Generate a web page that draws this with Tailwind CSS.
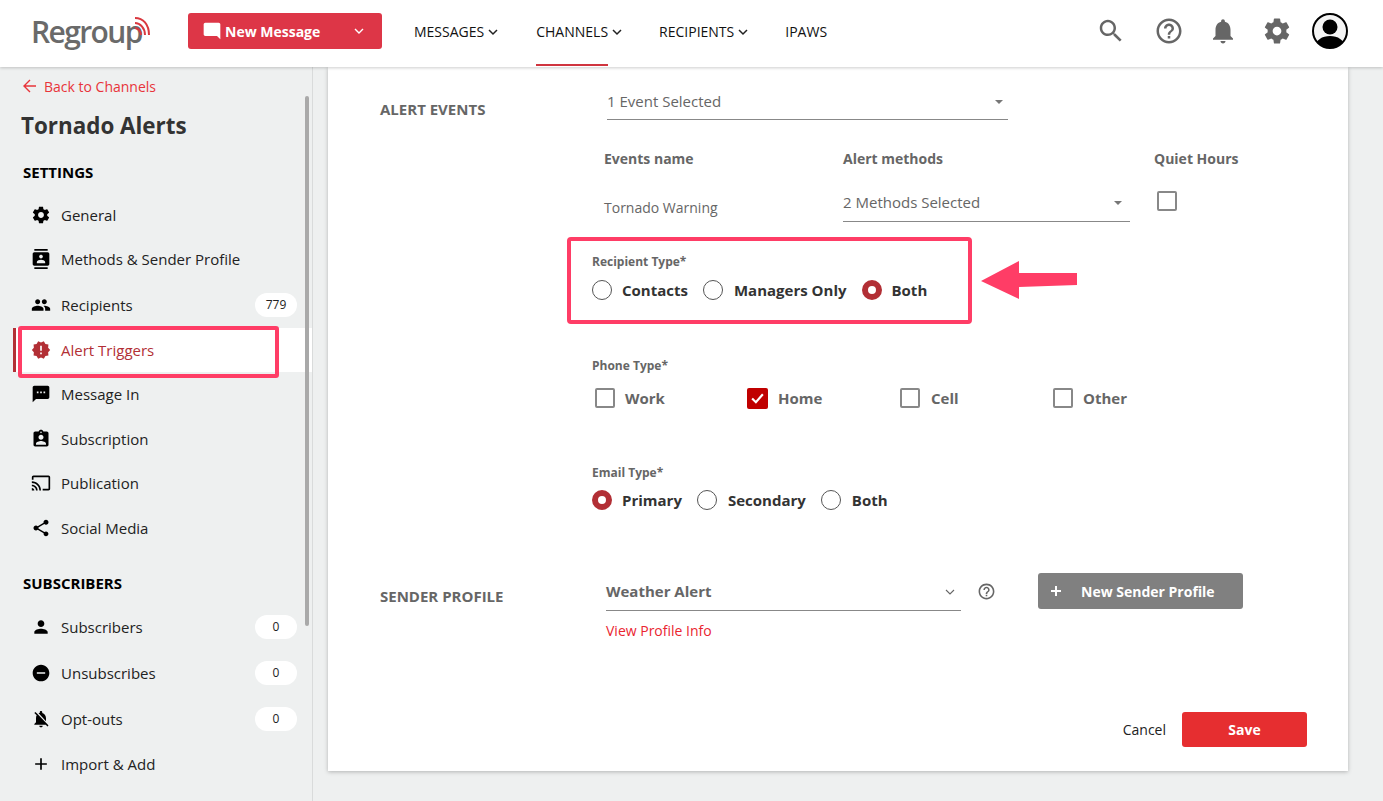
<!DOCTYPE html>
<html>
<head>
<meta charset="utf-8">
<script src="https://cdn.jsdelivr.net/npm/@tailwindcss/browser@4"></script>
</head>
<body class="bg-[#eef0f0] font-['Open_Sans',sans-serif] overflow-hidden">
<div class="relative w-[1383px] h-[801px] overflow-hidden flex flex-col">
  <header class="h-[67px] shrink-0 bg-white shadow-[0_1px_3px_rgba(0,0,0,0.2)] flex items-start relative z-10">
    <div class="w-[188px] shrink-0 pl-[31px] pt-[11px] relative h-full">
      <span class="block text-[30px] leading-[42px] font-semibold text-[#6a6a6a] tracking-[-1.6px]">Regroup</span>
      <svg class="absolute left-[128px] top-[16px]" width="24" height="22" viewBox="0 0 24 22" fill="none" stroke="#d9383f" stroke-width="2"><path d="M7 2c8 0 14 6 14 17"/><path d="M7 7c5 0 10 5 10 12"/><path d="M7 12c3 0 6 3 6 7"/></svg>
    </div>
    <div class="mt-[13px] w-[194px] h-[36px] bg-[#dd3647] rounded-[3px] flex items-center pl-[14px] text-white">
      <svg width="20" height="20" viewBox="0 0 24 24" fill="#fff" class="-scale-x-100 mr-[3px] shrink-0"><path d="M20 2H4c-1.1 0-2 .9-2 2v18l4-4h14c1.1 0 2-.9 2-2V4c0-1.1-.9-2-2-2z"/></svg>
      <span class="text-[14px] font-bold">New Message</span>
      <svg class="ml-[33px]" width="12" height="12" viewBox="0 0 12 12" fill="none" stroke="#fff" stroke-width="1.4"><path d="M2 4l4 4 4-4"/></svg>
    </div>
    <nav class="flex h-full text-[14px] text-[#111]">
      <div class="ml-[32px] flex items-center h-[63px] gap-[4px]">MESSAGES<svg width="10" height="8" viewBox="0 0 10 8" fill="none" stroke="#222" stroke-width="1.5"><path d="M1 2l4 4 4-4"/></svg></div>
      <div class="ml-[38px] flex items-center h-[66px] gap-[4px]"><span class="h-full flex items-center pb-[2px] border-b-2 border-[#d0353f]">CHANNELS</span><svg class="-mt-[3px]" width="10" height="8" viewBox="0 0 10 8" fill="none" stroke="#222" stroke-width="1.5"><path d="M1 2l4 4 4-4"/></svg></div>
      <div class="ml-[37px] flex items-center h-[63px] gap-[4px]">RECIPIENTS<svg width="10" height="8" viewBox="0 0 10 8" fill="none" stroke="#222" stroke-width="1.5"><path d="M1 2l4 4 4-4"/></svg></div>
      <div class="ml-[37px] flex items-center h-[63px]">IPAWS</div>
    </nav>
    <div class="ml-auto mr-[35px] mt-[13px] flex items-center h-[36px] text-[#666]">
      <svg width="30" height="30" viewBox="0 0 24 24" fill="#666"><path d="M15.5 14h-.79l-.28-.27C15.41 12.59 16 11.11 16 9.5 16 5.91 13.09 3 9.5 3S3 5.91 3 9.5 5.91 16 9.5 16c1.61 0 3.09-.59 4.23-1.57l.27.28v.79l5 4.99L20.49 19l-4.99-5zm-6 0C7.01 14 5 11.99 5 9.5S7.01 5 9.5 5 14 7.01 14 9.5 11.99 14 9.5 14z"/></svg>
      <svg class="ml-[28px]" width="30" height="30" viewBox="0 0 24 24" fill="#666"><path d="M11 18h2v-2h-2v2zm1-16C6.48 2 2 6.48 2 12s4.48 10 10 10 10-4.48 10-10S17.52 2 12 2zm0 18c-4.41 0-8-3.59-8-8s3.59-8 8-8 8 3.59 8 8-3.59 8-8 8zm0-14c-2.21 0-4 1.79-4 4h2c0-1.1.9-2 2-2s2 .9 2 2c0 2-3 1.75-3 5h2c0-2.25 3-2.5 3-5 0-2.21-1.79-4-4-4z"/></svg>
      <svg class="ml-[24px]" width="30" height="30" viewBox="0 0 24 24" fill="#666"><path d="M12 22c1.1 0 2-.9 2-2h-4c0 1.1.89 2 2 2zm6-6v-5c0-3.07-1.64-5.64-4.5-6.32V4c0-.83-.67-1.5-1.5-1.5s-1.5.67-1.5 1.5v.68C7.63 5.36 6 7.92 6 11v5l-2 2v1h16v-1l-2-2z"/></svg>
      <svg class="ml-[24px]" width="30" height="30" viewBox="0 0 24 24" fill="#666"><path d="M19.43 12.98c.04-.32.07-.64.07-.98s-.03-.66-.07-.98l2.11-1.65c.19-.15.24-.42.12-.64l-2-3.46c-.12-.22-.39-.3-.61-.22l-2.49 1c-.52-.4-1.08-.73-1.69-.98l-.38-2.65C14.46 2.18 14.25 2 14 2h-4c-.25 0-.46.18-.49.42l-.38 2.65c-.61.25-1.17.59-1.69.98l-2.49-1c-.23-.09-.49 0-.61.22l-2 3.46c-.13.22-.07.49.12.64l2.11 1.65c-.04.32-.07.65-.07.98s.03.66.07.98l-2.11 1.65c-.19.15-.24.42-.12.64l2 3.46c.12.22.39.3.61.22l2.49-1c.52.4 1.08.73 1.69.98l.38 2.65c.03.24.24.42.49.42h4c.25 0 .46-.18.49-.42l.38-2.65c.61-.25 1.17-.59 1.69-.98l2.49 1c.23.09.49 0 .61-.22l2-3.46c.12-.22.07-.49-.12-.64l-2.11-1.65zM12 15.5c-1.93 0-3.5-1.57-3.5-3.5s1.57-3.5 3.5-3.5 3.5 1.57 3.5 3.5-1.57 3.5-3.5 3.5z"/></svg>
      <svg class="ml-[20px]" width="36" height="36" viewBox="0 0 36 36"><circle cx="18" cy="18" r="17" fill="#f4f4f4" stroke="#000" stroke-width="2"/><clipPath id="av"><circle cx="18" cy="18" r="17"/></clipPath><g clip-path="url(#av)" fill="#000"><circle cx="18" cy="14" r="7.5"/><path d="M3 36c0-9 7-13 15-13s15 4 15 13z"/></g></svg>
    </div>
  </header>

  <div class="flex flex-1 min-h-0">
    <aside class="relative w-[313px] shrink-0 border-r border-[#d9dbdb] text-[15px] text-[#222]">
      <div class="absolute left-[305px] top-[29px] w-[4px] h-[530px] rounded-full bg-[#a9a9a9]"></div>
      <div class="pl-[22px] pt-[8px] flex items-center h-[30px] text-[14px] text-[#e8343a]">
        <svg width="16" height="16" viewBox="0 0 16 16" fill="none" stroke="#e8343a" stroke-width="1.4" class="mr-[6px]"><path d="M14 8H2M8 2L2 8l6 6"/></svg>Back to Channels
      </div>
      <h1 class="pl-[21px] mt-[14px] text-[22.4px] leading-[30px] font-bold text-[#333]">Tornado Alerts</h1>
      <h2 class="pl-[23px] mt-[21px] text-[15px] leading-[20px] font-bold text-black">SETTINGS</h2>
      <ul class="mt-[11px]">
        <li class="h-[44px] flex items-center pl-[31px]"><svg class="mr-[10px]" width="20" height="20" viewBox="0 0 24 24"><path d="M19.43 12.98c.04-.32.07-.64.07-.98s-.03-.66-.07-.98l2.11-1.65c.19-.15.24-.42.12-.64l-2-3.46c-.12-.22-.39-.3-.61-.22l-2.49 1c-.52-.4-1.08-.73-1.69-.98l-.38-2.65C14.46 2.18 14.25 2 14 2h-4c-.25 0-.46.18-.49.42l-.38 2.65c-.61.25-1.17.59-1.69.98l-2.49-1c-.23-.09-.49 0-.61.22l-2 3.46c-.13.22-.07.49.12.64l2.11 1.65c-.04.32-.07.65-.07.98s.03.66.07.98l-2.11 1.65c-.19.15-.24.42-.12.64l2 3.46c.12.22.39.3.61.22l2.49-1c.52.4 1.08.73 1.69.98l.38 2.65c.03.24.24.42.49.42h4c.25 0 .46-.18.49-.42l.38-2.65c.61-.25 1.17-.59 1.69-.98l2.49 1c.23.09.49 0 .61-.22l2-3.46c.12-.22.07-.49-.12-.64l-2.11-1.65zM12 15.5c-1.93 0-3.5-1.57-3.5-3.5s1.57-3.5 3.5-3.5 3.5 1.57 3.5 3.5-1.57 3.5-3.5 3.5z"/></svg>General</li>
        <li class="h-[44px] flex items-center pl-[31px]"><svg class="mr-[10px]" width="20" height="20" viewBox="0 0 24 24"><path d="M20 0H4v2h16V0zM4 24h16v-2H4v2zM20 4H4c-1.1 0-2 .9-2 2v12c0 1.1.9 2 2 2h16c1.1 0 2-.9 2-2V6c0-1.1-.9-2-2-2zm-8 2.75c1.24 0 2.25 1.01 2.25 2.25s-1.01 2.25-2.25 2.25S9.75 10.24 9.75 9 10.76 6.75 12 6.75zM17 17H7v-1.5c0-1.67 3.33-2.5 5-2.5s5 .83 5 2.5V17z"/></svg>Methods &amp; Sender Profile</li>
        <li class="h-[44px] mt-[2px] flex items-center pl-[31px]"><svg class="mr-[10px]" width="20" height="20" viewBox="0 0 24 24"><path d="M16 11c1.66 0 2.99-1.34 2.99-3S17.66 5 16 5c-1.66 0-3 1.34-3 3s1.34 3 3 3zm-8 0c1.66 0 2.99-1.34 2.99-3S9.66 5 8 5C6.34 5 5 6.34 5 8s1.34 3 3 3zm0 2c-2.33 0-7 1.17-7 3.5V19h14v-2.5c0-2.33-4.67-3.5-7-3.5zm8 0c-.29 0-.62.02-.97.05 1.16.84 1.97 1.97 1.97 3.45V19h6v-2.5c0-2.33-4.67-3.5-7-3.5z"/></svg>Recipients<span class="ml-auto mr-[15px] w-[42px] h-[24px] rounded-full bg-white flex items-center justify-center text-[12px]">779</span></li>
        <li class="h-[44px] mt-[1px] ml-[13px] flex items-center pl-[15px] bg-white border-l-[3px] border-[#b22f35] text-[#b22f35]"><svg class="mr-[10px]" width="20" height="20" viewBox="0 0 24 24" fill="#b22f35"><path d="M23 12l-2.44-2.78.34-3.68-3.61-.82-1.89-3.18L12 3 8.6 1.54 6.71 4.72l-3.61.81.34 3.68L1 12l2.44 2.78-.34 3.69 3.61.82 1.89 3.18L12 21l3.4 1.46 1.89-3.18 3.61-.82-.34-3.68L23 12zm-10 5h-2v-2h2v2zm0-4h-2V7h2v6z"/></svg>Alert Triggers</li>
        <li class="h-[44px] flex items-center pl-[31px]"><svg class="mr-[10px]" width="20" height="20" viewBox="0 0 24 24"><path d="M20 2H4c-1.1 0-1.99.9-1.99 2L2 22l4-4h14c1.1 0 2-.9 2-2V4c0-1.1-.9-2-2-2zM9 11H7V9h2v2zm4 0h-2V9h2v2zm4 0h-2V9h2v2z"/></svg>Message In</li>
        <li class="h-[44px] mt-[1px] flex items-center pl-[31px]"><svg class="mr-[10px]" width="20" height="20" viewBox="0 0 24 24"><path d="M19 3h-4.18C14.4 1.84 13.3 1 12 1c-1.3 0-2.4.84-2.82 2H5c-1.1 0-2 .9-2 2v14c0 1.1.9 2 2 2h14c1.1 0 2-.9 2-2V5c0-1.1-.9-2-2-2zm-7 0c.55 0 1 .45 1 1s-.45 1-1 1-1-.45-1-1 .45-1 1-1zm0 4c1.66 0 3 1.34 3 3s-1.34 3-3 3-3-1.34-3-3 1.34-3 3-3zm6 12H6v-1.4c0-2 4-3.1 6-3.1s6 1.1 6 3.1V19z"/></svg>Subscription</li>
        <li class="h-[44px] flex items-center pl-[31px]"><svg class="mr-[10px]" width="20" height="20" viewBox="0 0 24 24"><path d="M21 3H3c-1.1 0-2 .9-2 2v3h2V5h18v14h-7v2h7c1.1 0 2-.9 2-2V5c0-1.1-.9-2-2-2zM1 18v3h3c0-1.66-1.34-3-3-3zm0-4v2c2.76 0 5 2.24 5 5h2c0-3.87-3.13-7-7-7zm0-4v2c4.97 0 9 4.03 9 9h2c0-6.08-4.93-11-11-11z"/></svg>Publication</li>
        <li class="h-[44px] mt-[1px] flex items-center pl-[31px]"><svg class="mr-[10px]" width="20" height="20" viewBox="0 0 24 24"><path d="M18 16.08c-.76 0-1.44.3-1.96.77L8.91 12.7c.05-.23.09-.46.09-.7s-.04-.47-.09-.7l7.05-4.11c.54.5 1.25.81 2.04.81 1.66 0 3-1.34 3-3s-1.34-3-3-3-3 1.34-3 3c0 .24.04.47.09.7L8.04 9.81C7.5 9.31 6.79 9 6 9c-1.66 0-3 1.34-3 3s1.34 3 3 3c.79 0 1.5-.31 2.04-.81l7.12 4.16c-.05.21-.08.43-.08.65 0 1.61 1.31 2.92 2.92 2.92s2.92-1.31 2.92-2.92-1.31-2.92-2.92-2.92z"/></svg>Social Media</li>
      </ul>
      <h2 class="pl-[23px] mt-[23px] text-[15px] leading-[20px] font-bold text-black">SUBSCRIBERS</h2>
      <ul class="mt-[12px]">
        <li class="h-[44px] flex items-center pl-[31px]"><svg class="mr-[10px]" width="20" height="20" viewBox="0 0 24 24"><path d="M12 12c2.21 0 4-1.79 4-4s-1.79-4-4-4-4 1.79-4 4 1.79 4 4 4zm0 2c-2.67 0-8 1.34-8 4v2h16v-2c0-2.66-5.33-4-8-4z"/></svg>Subscribers<span class="ml-auto mr-[15px] w-[42px] h-[24px] rounded-full bg-white flex items-center justify-center text-[12px]">0</span></li>
        <li class="h-[44px] mt-[2px] flex items-center pl-[31px]"><svg class="mr-[10px]" width="20" height="20" viewBox="0 0 24 24"><path d="M12 2C6.48 2 2 6.48 2 12s4.48 10 10 10 10-4.48 10-10S17.52 2 12 2zm5 11H7v-2h10v2z"/></svg>Unsubscribes<span class="ml-auto mr-[15px] w-[42px] h-[24px] rounded-full bg-white flex items-center justify-center text-[12px]">0</span></li>
        <li class="h-[44px] mt-[2px] flex items-center pl-[31px]"><svg class="mr-[10px]" width="20" height="20" viewBox="0 0 24 24"><path d="M20 18.69L7.84 6.14 5.27 3.49 4 4.76l2.8 2.8v.01c-.52.99-.8 2.16-.8 3.42v5l-2 2v1h13.73l2 2L21 19.72l-1-1.03zM12 22c1.11 0 2-.89 2-2h-4c0 1.11.89 2 2 2zm6-7.32V11c0-3.08-1.64-5.64-4.5-6.32V4c0-.83-.67-1.5-1.5-1.5s-1.5.67-1.5 1.5v.68c-.15.03-.29.08-.42.12-.1.03-.2.07-.3.11h-.01c-.2.08-.4.17-.59.27-.01 0-.01 0-.02.01L18 14.68z"/></svg>Opt-outs<span class="ml-auto mr-[15px] w-[42px] h-[24px] rounded-full bg-white flex items-center justify-center text-[12px]">0</span></li>
        <li class="h-[44px] mt-[1px] flex items-center pl-[31px]"><svg class="mr-[10px]" width="20" height="20" viewBox="0 0 24 24"><path d="M19 13h-6v6h-2v-6H5v-2h6V5h2v6h6v2z"/></svg>Import &amp; Add</li>
      </ul>
    </aside>

    <main class="flex-1 pl-[15px] pr-[35px]">
      <div class="h-[704px] bg-white shadow-[0_1px_4px_rgba(0,0,0,0.25)] pl-[52px] text-[#666]">
        <!-- alert events -->
        <div class="flex pt-[19px]">
          <div class="w-[212px] pt-[13px] text-[15px] leading-[20px] font-bold">ALERT EVENTS</div>
          <div class="ml-[15px] w-[401px] h-[34px] pb-[2px] border-b border-[#888] flex items-center justify-between pr-[5px] text-[15px]">1 Event Selected
            <svg width="8" height="4" viewBox="0 0 8 4" fill="#777"><path d="M0 0h8L4 4z"/></svg></div>
        </div>
        <div class="flex ml-[224px] mt-[29px] text-[14px] leading-[20px] font-bold">
          <div class="w-[239px]">Events name</div>
          <div class="w-[311px]">Alert methods</div>
          <div>Quiet Hours</div>
        </div>
        <div class="flex ml-[224px] mt-[15px] h-[48px]">
          <div class="w-[239px] pt-[14px] text-[14px] leading-[20px]">Tornado Warning</div>
          <div class="w-[287px] h-[38px] border-b border-[#888] flex items-center justify-between pr-[8px] text-[15px]">2 Methods Selected
            <svg width="8" height="4" viewBox="0 0 8 4" fill="#777"><path d="M0 0h8L4 4z"/></svg></div>
          <div class="ml-[27px] mt-[7px] w-[20px] h-[20px] rounded-[2px] border-2 border-[#888]"></div>
        </div>
        <!-- recipient type -->
        <div class="ml-[212px] mt-[21px] text-[12px] leading-[18px] font-bold">Recipient Type*</div>
        <div class="ml-[212px] mt-[7px] h-[24px] flex items-center text-[15px] font-bold text-[#333]">
          <span class="w-[20px] h-[20px] rounded-full border border-[#555] bg-white"></span><span class="ml-[10px]">Contacts</span>
          <span class="ml-[15px] w-[20px] h-[20px] rounded-full border border-[#555] bg-white"></span><span class="ml-[11px]">Managers Only</span>
          <span class="ml-[15px] w-[20px] h-[20px] rounded-full border-[6px] border-[#b22f35] bg-white"></span><span class="ml-[10px]">Both</span>
        </div>
        <!-- phone type -->
        <div class="ml-[212px] mt-[55px] text-[12px] leading-[18px] font-bold">Phone Type*</div>
        <div class="ml-[215px] mt-[11px] h-[24px] flex items-center text-[15px] font-bold">
          <div class="w-[152px] flex items-center"><span class="w-[20px] h-[20px] rounded-[2px] border-2 border-[#888]"></span><span class="ml-[10px]">Work</span></div>
          <div class="w-[153px] flex items-center"><span class="w-[21px] h-[21px] rounded-[2px] bg-[#c00000] flex items-center justify-center"><svg width="15" height="15" viewBox="0 0 14 14" fill="none" stroke="#fff" stroke-width="2"><path d="M2 7l3.5 3.5L12 3"/></svg></span><span class="ml-[10px]">Home</span></div>
          <div class="w-[153px] flex items-center"><span class="w-[20px] h-[20px] rounded-[2px] border-2 border-[#888]"></span><span class="ml-[11px]">Cell</span></div>
          <div class="flex items-center"><span class="w-[20px] h-[20px] rounded-[2px] border-2 border-[#888]"></span><span class="ml-[10px]">Other</span></div>
        </div>
        <!-- email type -->
        <div class="ml-[212px] mt-[54px] text-[12px] leading-[18px] font-bold">Email Type*</div>
        <div class="ml-[212px] mt-[6px] h-[24px] flex items-center text-[15px] font-bold text-[#333]">
          <span class="w-[20px] h-[20px] rounded-full border-[6px] border-[#b22f35] bg-white"></span><span class="ml-[10px]">Primary</span>
          <span class="ml-[15px] w-[20px] h-[20px] rounded-full border border-[#555] bg-white"></span><span class="ml-[11px]">Secondary</span>
          <span class="ml-[15px] w-[20px] h-[20px] rounded-full border border-[#555] bg-white"></span><span class="ml-[11px]">Both</span>
        </div>
        <!-- sender profile -->
        <div class="flex mt-[61px]">
          <div class="w-[226px] pt-[13px] text-[15px] leading-[20px] font-bold">SENDER PROFILE</div>
          <div class="w-[355px] h-[38px] border-b border-[#888] flex items-center justify-between pr-[6px] text-[15px] font-bold">Weather Alert
            <svg width="10" height="6" viewBox="0 0 10 6" fill="none" stroke="#666" stroke-width="1.1"><path d="M1 1l4 4 4-4"/></svg></div>
          <svg class="ml-[16px] mt-[9px]" width="19" height="19" viewBox="0 0 24 24" fill="#666"><path d="M11 18h2v-2h-2v2zm1-16C6.48 2 2 6.48 2 12s4.48 10 10 10 10-4.48 10-10S17.52 2 12 2zm0 18c-4.41 0-8-3.59-8-8s3.59-8 8-8 8 3.59 8 8-3.59 8-8 8zm0-14c-2.21 0-4 1.79-4 4h2c0-1.1.9-2 2-2s2 .9 2 2c0 2-3 1.75-3 5h2c0-2.25 3-2.5 3-5 0-2.21-1.79-4-4-4z"/></svg>
          <div class="ml-[42px] w-[205px] h-[36px] rounded-[3px] bg-[#808080] text-white flex items-center pl-[12px] text-[14px] font-bold"><svg width="12" height="12" viewBox="0 0 12 12" fill="none" stroke="#fff" stroke-width="2"><path d="M6 1v10M1 6h10"/></svg><span class="ml-[19px]">New Sender Profile</span></div>
        </div>
        <div class="ml-[226px] mt-[10px] text-[14px] leading-[20px] text-[#ea2530]">View Profile Info</div>
        <!-- actions -->
        <div class="flex items-center justify-end mt-[71px] pr-[41px]">
          <span class="text-[14px] text-[#222]">Cancel</span>
          <span class="ml-[16px] w-[125px] h-[35px] rounded-[3px] bg-[#e62e30] text-white text-[14px] font-bold flex items-center justify-center">Save</span>
        </div>
      </div>
    </main>
  </div>

  <!-- annotations over the screenshot -->
  <div class="absolute left-[18px] top-[326px] w-[261px] h-[52px] rounded-[3px] border-[4px] border-[#ff3d66]"></div>
  <div class="absolute left-[567px] top-[237px] w-[405px] h-[87px] rounded-[4px] border-[4px] border-[#ff3d66]"></div>
  <svg class="absolute left-[980px] top-[260px]" width="98" height="40" viewBox="0 0 98 40" fill="#ff3d66"><path d="M1 21L39 1v12l58 0v12l-58 2v12z"/></svg>
</div>
</body>
</html>
